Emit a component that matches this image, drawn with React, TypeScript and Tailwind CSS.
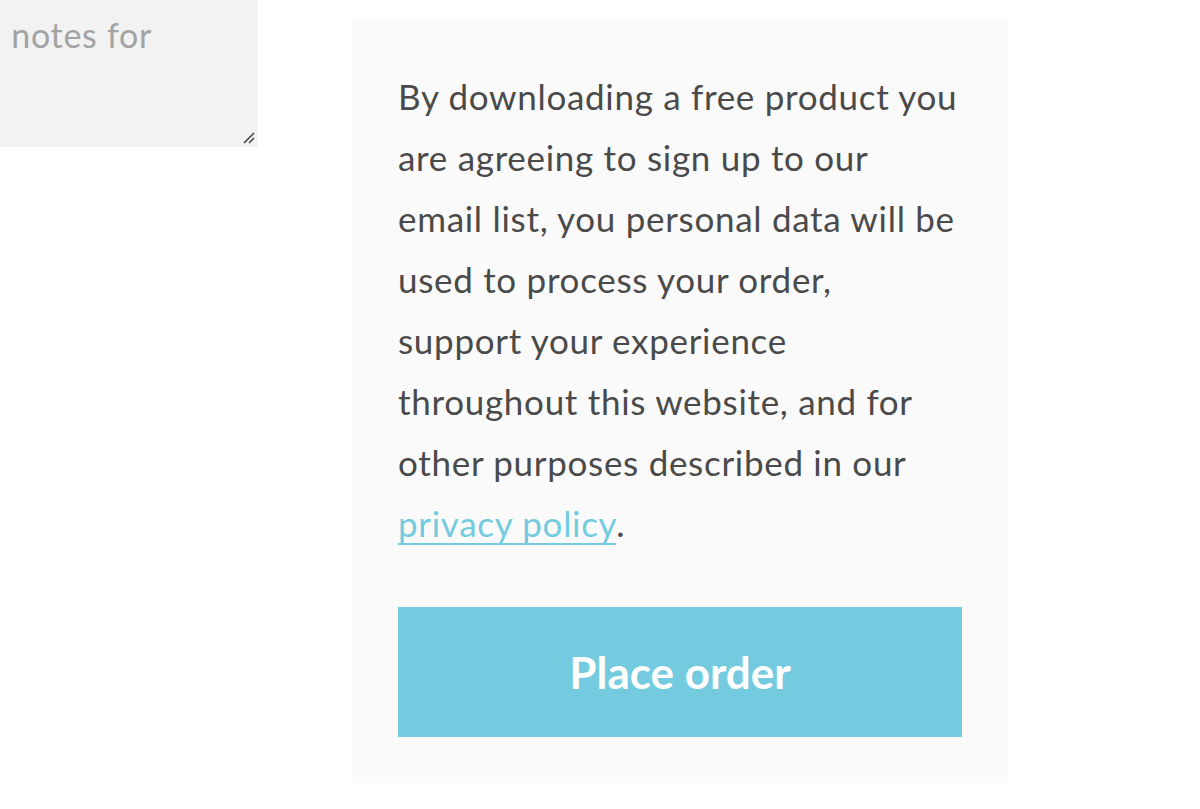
const lines = [
  'By downloading a free product you',
  'are agreeing to sign up to our',
  'email list, you personal data will be',
  'used to process your order,',
  'support your experience',
  'throughout this website, and for',
  'other purposes described in our',
]

export default function App() {
  return (
    <div className="flex min-h-[809px] bg-white font-['Lato',sans-serif] tracking-[0.7px]">
      <div className="w-[258px] shrink-0">
        <div className="relative flex h-[147px] w-[258px] justify-end overflow-hidden whitespace-nowrap bg-[#f2f2f2] pr-[106px] text-[34px] leading-[61px] text-[#a3a3a3]">
          <span className="mt-[4px]">Notes about your order, e.g. notes for</span>
          <svg className="absolute bottom-[2px] right-[2px] h-[16px] w-[16px]" viewBox="0 0 16 16">
            <path d="M14 4 L4 14 M14 9 L9 14" stroke="#4a4a4a" strokeWidth="1.6" />
          </svg>
        </div>
      </div>
      <div className="ml-[94px] mt-[20px] w-[656px] self-start bg-[#fafafa] px-[46px] pt-[46px] pb-[46px]">
        <p className="text-[35px] leading-[61px] text-[#4a4a4a]">
          {lines.map((l) => (
            <span key={l} className="block whitespace-nowrap">
              {l}
            </span>
          ))}
          <a href="#" className="text-[#73cbe0] underline underline-offset-[6px] decoration-[1.5px]">
            privacy policy
          </a>
          .
        </p>
        <button className="mt-[53px] flex h-[130px] w-full items-center justify-center bg-[#74cbdf] text-[44px] font-bold tracking-normal text-white">
          Place order
        </button>
      </div>
    </div>
  )
}
